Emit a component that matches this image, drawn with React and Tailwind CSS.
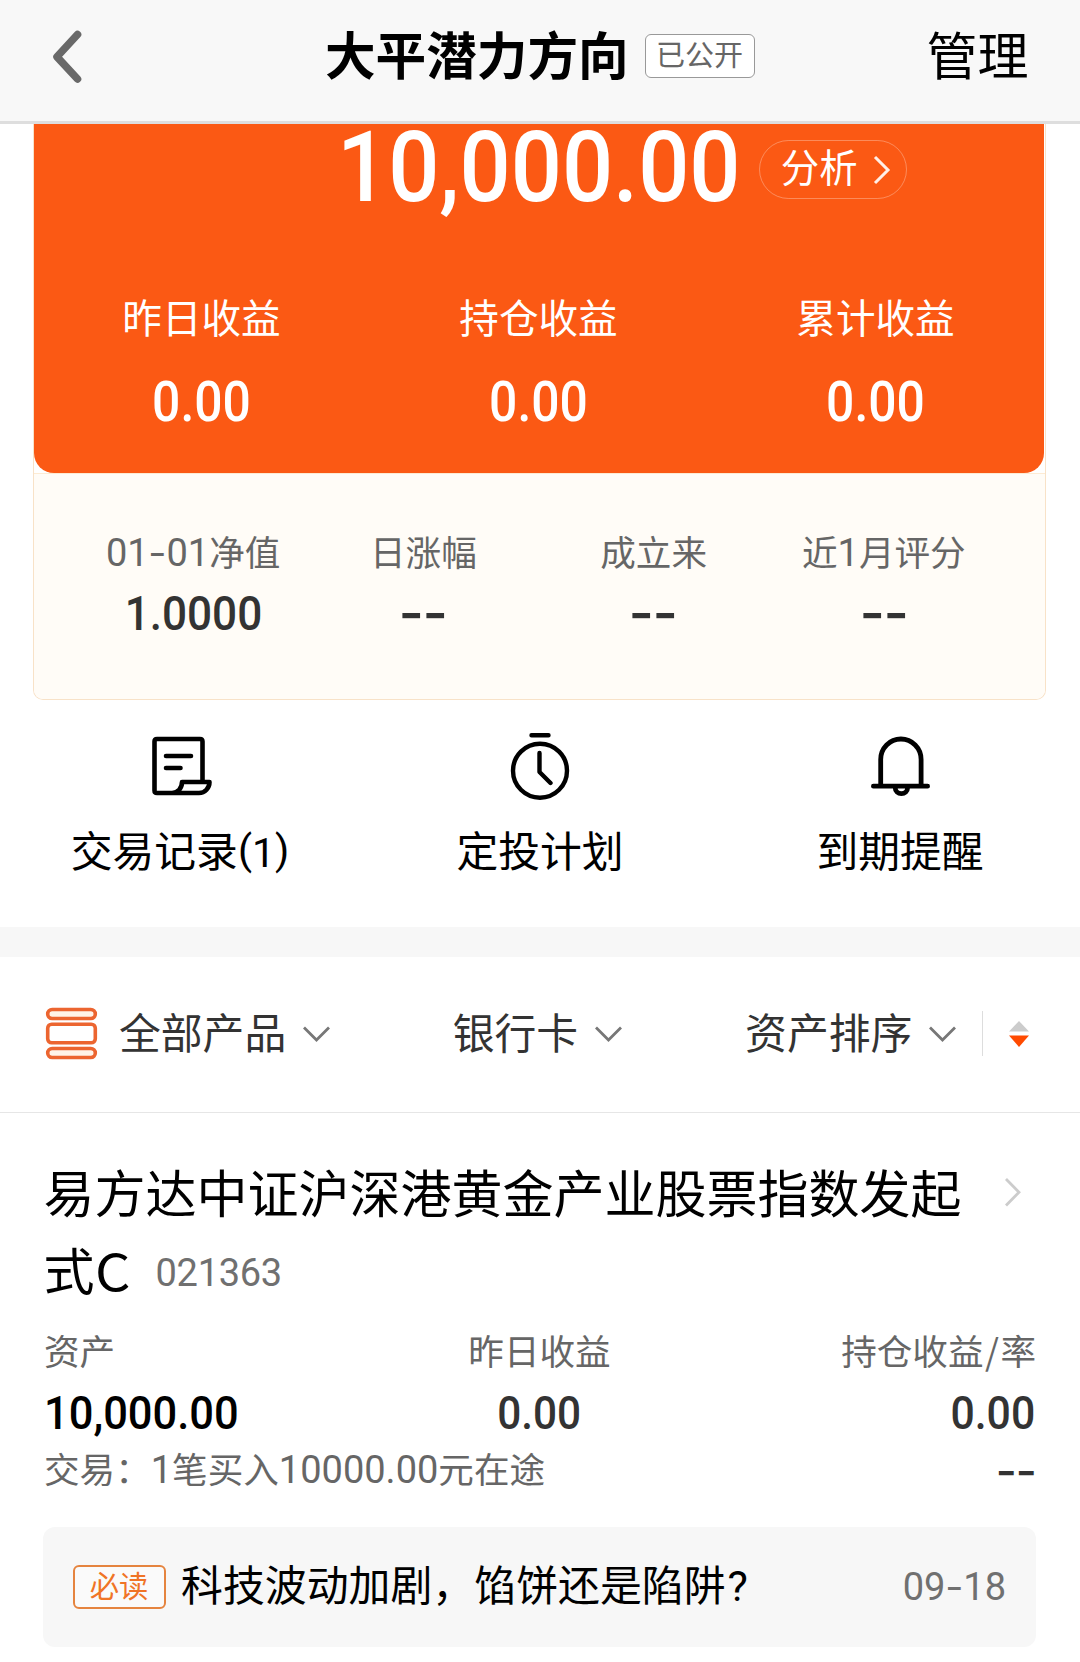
import React from "react";

const NUM = "font-['Roboto','Noto_Sans_CJK_SC',sans-serif]";

function Digits({ children }) {
  return <span className={`${NUM} text-[38px] leading-none`}>{children}</span>;
}

function Hyphen() {
  return <span className="mx-[3.7px] inline-block scale-x-[1.4]">-</span>;
}

function Amount({ children, className = "scale-x-[0.91]" }) {
  return <div className={`${NUM} font-medium whitespace-nowrap ${className}`}>{children}</div>;
}

function Dashes({ className = "" }) {
  return (
    <div className={`inline-block scale-x-[1.32] font-bold whitespace-nowrap text-[#333] ${className}`}>
      --
    </div>
  );
}

function ChevronDown() {
  return (
    <svg className="ml-[16px] shrink-0" width="29" height="18" viewBox="0 0 29 18" fill="none">
      <path d="M2 2.5 14.5 15 27 2.5" stroke="#777" strokeWidth="2.8" />
    </svg>
  );
}

function RecordIcon() {
  return (
    <svg width="72" height="72" viewBox="0 0 72 72" fill="none" stroke="#000" strokeWidth="4.6" strokeLinecap="round" strokeLinejoin="round">
      <path d="M58.5 52V11.5Q58.5 9 56 9H13Q10.5 9 10.5 11.5V60.5Q10.5 63 13 63H55C61 63 65.5 58 65.5 52H38C38 58 34 63 28 63" />
      <path d="M22 26H47M22 38H36.5" />
    </svg>
  );
}

function TimerIcon() {
  return (
    <svg width="72" height="72" viewBox="0 0 72 72" fill="none" stroke="#000" strokeWidth="4.4" strokeLinecap="round" strokeLinejoin="round">
      <circle cx="36" cy="40.7" r="27" />
      <path d="M27.5 5.3H44.5M35.5 23V42L46.5 53" />
    </svg>
  );
}

function BellIcon() {
  return (
    <svg width="72" height="72" viewBox="0 0 72 72" fill="none" stroke="#000" strokeWidth="4.8" strokeLinecap="round" strokeLinejoin="round">
      <path d="M16.7 55V29.5a20.2 20.5 0 0 1 40.4 0V55M9.4 56.2H63.6M31.2 57.8a6.2 5.8 0 0 0 12.4 0" />
    </svg>
  );
}

function ListIcon() {
  return (
    <svg className="shrink-0" width="53" height="53" viewBox="0 0 53 53" fill="#fff3e8" stroke="#ec6530" strokeWidth="3.6">
      <rect x="2.7" y="2.5" width="47.6" height="9" rx="4.5" />
      <rect x="2.7" y="17.2" width="47.6" height="18.6" rx="4" fill="#fff" />
      <rect x="2.7" y="41.5" width="47.6" height="9" rx="4.5" />
    </svg>
  );
}

const profits = ["昨日收益", "持仓收益", "累计收益"];

const recordLabel = (
  <>
    交易记录
    <span className="font-['Roboto',sans-serif] text-[41px] leading-none">
      <span className="relative -top-[3px]">(</span>1<span className="relative -top-[3px]">)</span>
    </span>
  </>
);

const actions = [
  { icon: <RecordIcon />, label: recordLabel },
  { icon: <TimerIcon />, label: "定投计划" },
  { icon: <BellIcon />, label: "到期提醒" },
];

export default function App() {
  return (
    <div className="h-[1662px] w-[1080px] overflow-hidden bg-white font-['Noto_Sans_CJK_SC',sans-serif] text-black">
      <header className="h-[124px] border-b-[3px] border-[#dedede] bg-[#f8f8f8]">
        <div className="flex h-[106px] items-center">
          <svg className="mt-[7px] ml-[48px]" width="40" height="60" viewBox="0 0 40 60" fill="none">
            <path d="M29.5 7.5 9 29.8 29.5 52" stroke="#696969" strokeWidth="7.6" strokeLinecap="round" strokeLinejoin="round" />
          </svg>
          <h1 className="ml-[237px] text-[50.6px] leading-[60px] font-bold whitespace-nowrap">大平潜力方向</h1>
          <div className="mt-[6px] ml-[16px] flex h-[44px] w-[110px] items-center justify-center rounded-[6px] border border-[#999] bg-white pb-[5px] text-[29px] leading-none text-[#666]">
            已公开
          </div>
          <div className="ml-[172px] text-[51px] leading-[60px] whitespace-nowrap">管理</div>
        </div>
      </header>

      <section className="ml-[33px] h-[576px] w-[1013px] rounded-b-[10px] border border-t-0 border-[#f8e2c8]">
        <div className="mr-px h-[349px] rounded-b-[20px] bg-[#fb5914] pt-[16px] text-white">
          <div className="grid h-[59px] grid-cols-[1fr_auto_1fr] items-center">
            <div className="col-start-2 flex h-[59px]">
              <Amount className="relative -top-[2px] scale-x-[0.91] text-[99px] leading-[59px]">10,000.00</Amount>
            </div>
            <div className="-ml-[2px] flex h-[59px] w-[148px] items-center rounded-full border border-white/30 pl-[21px]">
              <span className="pb-[8px] text-[38.4px] leading-none">分析</span>
              <svg className="ml-[15px]" width="20" height="30" viewBox="0 0 20 30" fill="none">
                <path d="M2 2 15 15 2 28" stroke="#fff" strokeOpacity="0.9" strokeWidth="3" />
              </svg>
            </div>
          </div>
          <div className="mt-[95px] -ml-px grid grid-cols-3 text-center">
            {profits.map((label) => (
              <div key={label} className="flex flex-col items-center">
                <div className="text-[39.6px] leading-[44px]">{label}</div>
                <Amount className="mt-[36px] scale-x-[0.89] text-[56px] leading-[56px]">0.00</Amount>
              </div>
            ))}
          </div>
        </div>
        <div className="grid h-[226px] grid-cols-4 rounded-b-[9px] border-t border-[#fdebd3] bg-[#fffcf7] pt-[57px] pr-[46px] pl-[44px] text-center text-[35.6px] leading-[40px] text-[#666]">
          <div className="flex flex-col items-center">
            <div className="h-[40px] whitespace-nowrap"><Digits>01<Hyphen />01</Digits>净值</div>
            <Amount className="mt-[18px] scale-x-[0.9] text-[49px] leading-[50px] text-[#333]">1.0000</Amount>
          </div>
          <div>
            <div className="h-[40px]">日涨幅</div>
            <Dashes className="mt-[13px] text-[49px] leading-[50px]" />
          </div>
          <div>
            <div className="h-[40px]">成立来</div>
            <Dashes className="mt-[13px] text-[49px] leading-[50px]" />
          </div>
          <div>
            <div className="h-[40px]">近<Digits>1</Digits>月评分</div>
            <Dashes className="mt-[13px] text-[49px] leading-[50px]" />
          </div>
        </div>
      </section>

      <nav className="grid h-[227px] grid-cols-3 pt-[30px]">
        {actions.map((action, i) => (
          <div key={i} className="flex flex-col items-center">
            {action.icon}
            <div className="mt-[22px] h-[50px] text-[41.8px] leading-[50px] whitespace-nowrap">{action.label}</div>
          </div>
        ))}
      </nav>

      <div className="h-[30px] bg-[#f7f7f7]" />

      <div className="flex h-[156px] items-center border-b border-[#e6e6e6] pb-[2px] pl-[45px] text-[41.8px] leading-none whitespace-nowrap text-[#333]">
        <ListIcon />
        <span className="ml-[21px] pb-[3px]">全部产品</span>
        <ChevronDown />
        <span className="ml-[121.5px] pb-[3px]">银行卡</span>
        <ChevronDown />
        <span className="ml-[122px] pb-[3px]">资产排序</span>
        <ChevronDown />
        <div className="ml-[25px] h-[45px] w-px bg-[#ddd]" />
        <svg className="ml-[24.5px]" width="22" height="28" viewBox="0 0 22 28">
          <path d="M11 1 21 11.5H1Z" fill="#ccc" />
          <path d="M11 27 21 15.5H1Z" fill="#ff4a00" />
        </svg>
      </div>

      <main className="pt-[39px] pr-[44px] pl-[43px]">
        <div className="flex pl-[0.5px]">
          <h2 className="w-[940px] text-[51px] leading-[78px]">
            易方达中证沪深港黄金产业股票指数发起
            <br />
            式<span className="inline-block origin-left scale-x-[1.09] leading-none">C</span>
            <span className={`${NUM} relative -top-[5px] ml-[28.5px] text-[38px] leading-none tracking-[-0.3px] text-[#707070]`}>021363</span>
          </h2>
          <svg className="mt-[25px] ml-[20px]" width="20" height="30" viewBox="0 0 20 30" fill="none">
            <path d="M2 2 15 15.2 2 28.5" stroke="#ccc" strokeWidth="2.8" />
          </svg>
        </div>

        <div className="mt-[22px] grid grid-cols-3 text-[35.6px] leading-[40px] text-[#666]">
          <div className="pl-px">资产</div>
          <div className="text-center">昨日收益</div>
          <div className="text-right">持仓收益<span className="mx-[1.5px]">/</span>率</div>
        </div>
        <div className="mt-[18px] grid h-[50px] grid-cols-3 text-[46.5px] leading-[50px] text-[#333]">
          <div className="flex pl-px"><Amount className="origin-left scale-x-[0.935] text-black">10,000.00</Amount></div>
          <div className="flex justify-center"><Amount>0.00</Amount></div>
          <div className="flex justify-end pr-px"><Amount className="origin-right scale-x-[0.92]">0.00</Amount></div>
        </div>
        <div className="mt-[10px] flex h-[40px] justify-between text-[35.6px] leading-[40px] text-[#666]">
          <div className="pl-px">交易：<Digits>1</Digits>笔买入<Digits>10000.00</Digits>元在途</div>
          <Dashes className="relative -top-[1px] origin-right text-[41px]" />
        </div>

        <div className="mt-[39px] flex h-[120px] items-center rounded-[12px] bg-[#f7f7f7] pl-[30px]">
          <div className="flex h-[44px] w-[93px] items-center justify-center rounded-[6px] border-2 border-[#e5843f] bg-[#fafafa] pr-px pb-[4px] text-[29.3px] leading-none text-[#f07426]">
            必读
          </div>
          <div className="ml-[15px] pb-[8px] text-[41.9px] leading-[50px] whitespace-nowrap">
            科技波动加剧，馅饼还是陷阱<span className={`${NUM} ml-[2px] text-[43px] leading-none`}>?</span>
          </div>
          <div className={`${NUM} ml-auto pr-[30px] pb-[1px] text-[38px] leading-none text-[#707070]`}>09<Hyphen />18</div>
        </div>
      </main>
    </div>
  );
}
